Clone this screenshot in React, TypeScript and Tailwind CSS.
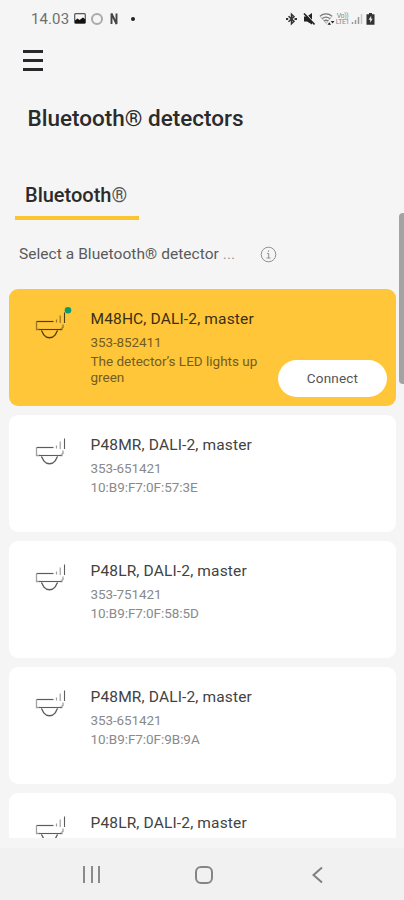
import type { ReactNode } from "react";

type Detector = {
  id: string;
  name: string;
  serial?: string;
  detail?: string;
  active?: boolean;
};

const detectors: Detector[] = [
  { id: "1", name: "M48HC, DALI-2, master", serial: "353-852411", detail: "The detector’s LED lights up green", active: true },
  { id: "2", name: "P48MR, DALI-2, master", serial: "353-651421", detail: "10:B9:F7:0F:57:3E" },
  { id: "3", name: "P48LR, DALI-2, master", serial: "353-751421", detail: "10:B9:F7:0F:58:5D" },
  { id: "4", name: "P48MR, DALI-2, master", serial: "353-651421", detail: "10:B9:F7:0F:9B:9A" },
  { id: "5", name: "P48LR, DALI-2, master" },
];

function StatusIcon({ width, children }: { width: number; children: ReactNode }) {
  return (
    <svg width={width} height="14" viewBox={`0 0 ${width} 14`} fill="none" className="shrink-0">
      {children}
    </svg>
  );
}

function StatusBar() {
  return (
    <div className="flex h-[38px] items-center justify-between pl-[31px] pr-[29px]">
      <div className="flex items-center">
        <span className="w-[43px] pt-px text-[15px] tracking-[0.1px] text-[#6f6f6f]">14.03</span>
        {/* picture */}
        <StatusIcon width={12}>
          <rect x="0.7" y="1.7" width="10.6" height="9.6" rx="1" stroke="#555" strokeWidth="1.2" />
          <path d="M1 11V8.5l2.5-2 2 1.5L9 5.5l2.3 2V11z" fill="#111" />
        </StatusIcon>
        <span className="ml-[5px] h-[12px] w-[12px] rounded-full border-2 border-[#aaa]" />
        <span className="ml-[7px]">
          <StatusIcon width={8}>
            <path d="M1.5 12V1.5L6.5 12V1.5" stroke="#444" strokeWidth="1.9" />
          </StatusIcon>
        </span>
        <span className="ml-[13px] h-1 w-1 rounded-full bg-[#222]" />
      </div>
      <div className="flex items-center">
        {/* bluetooth */}
        <StatusIcon width={11}>
          <path d="M2.500 4.300l5.500 5-2.500 2.500V2.200L8 4.700l-5.500 5" stroke="#333" strokeWidth="1.500" />
          <path d="M0 7h2.200M8.500 7H11" stroke="#333" strokeWidth="1.800" />
        </StatusIcon>
        {/* muted */}
        <span className="ml-[6px]">
          <StatusIcon width={12}>
            <path d="M1 4.500h3l5-3.500v11.500L4 9.500H1z" fill="#222" />
            <path d="M2.500 1.500l9 10" stroke="#f5f5f5" strokeWidth="1.200" />
            <path d="M1 1.500l10.500 11" stroke="#222" strokeWidth="1.600" />
          </StatusIcon>
        </span>
        {/* wifi */}
        <span className="ml-[4px]">
          <StatusIcon width={16}>
            <path d="M1 4.200C4.500 1.200 9.500 1.200 13 4.200M3 6.700c2.500-2 5.500-2 8 0M5 9c1.300-1 2.700-1 4 0" stroke="#777" strokeWidth="1.300" />
            <path d="M7.500 11.800L1 4.200M7.500 11l5.500-6.800" stroke="#aaa" strokeWidth="0.900" />
            <path d="M8.500 12.800l1.800-2.600 1.800 2.600zM11.800 9h3.600l-1.800 2.600z" fill="#222" />
          </StatusIcon>
        </span>
        <span className="flex w-[15px] flex-col text-center text-[7px] leading-[6.500px] tracking-[-0.400px] text-[#888]">
          <span>Vo))</span>
          <span>LTE1</span>
        </span>
        <span className="ml-[1px]">
          <StatusIcon width={12}>
            <path d="M1.500 12v-2M4.500 12V8M7.500 12V5" stroke="#999" strokeWidth="1.500" />
            <path d="M10.500 12V2" stroke="#c8c8c8" strokeWidth="1.500" />
          </StatusIcon>
        </span>
        {/* battery */}
        <span className="ml-[3px]">
          <StatusIcon width={9}>
            <path d="M3 1h3v1.300h2.500v10.400H.5V2.300H3z" fill="#333" />
            <path d="M5.200 3.800L2.600 7.800h1.600v3l2.400-4H5.200z" fill="#eee" />
          </StatusIcon>
        </span>
      </div>
    </div>
  );
}

function DetectorIcon({ active }: { active?: boolean }) {
  const main = active ? "#51400f" : "#5c5c5c";
  const soft = active ? "#97762a" : "#a0a0a0";
  return (
    <svg width="38" height="34" viewBox="0 0 38 34" fill="none" className="shrink-0">
      <path d="M18.500 15.500H1.500" stroke={main} strokeWidth="1.200" />
      <path d="M1.500 15.500v8h3M25 23.500h2v-1.500l1-.500v-3" stroke={soft} strokeWidth="1.300" />
      <path d="M4 23.500h22.500" stroke={main} strokeWidth="1.100" />
      <path d="M6.300 24.500c1.200 1 1.400 3 2.700 4.700 2.600 3.400 8.400 3.400 11 0 1.300-1.700 1.500-3.700 2.700-4.700" stroke={main} strokeWidth="1.300" />
      <path d="M21.500 13.500v3M25.200 9.500v7.500" stroke={soft} strokeWidth="1.200" />
      <path d="M29.500 6.500v10.500" stroke={main} strokeWidth="1.100" />
      {active && <circle cx="33" cy="4.300" r="3.300" fill="#0b9b72" />}
    </svg>
  );
}

function DetectorCard({ detector }: { detector: Detector }) {
  const { name, serial, detail, active } = detector;
  return (
    <li
      className={[
        "relative flex h-[117px] shrink-0 rounded-[9px] pl-[26px]",
        active ? "bg-[#ffc63a]" : "bg-white",
      ].join(" ")}
    >
      <div className="w-[55.5px] shrink-0 pt-[17px]">
        <DetectorIcon active={active} />
      </div>
      <div className="pt-[20px]">
        <div className={`whitespace-nowrap text-[15.5px] leading-[20px] tracking-[0.15px] ${active ? "text-[#3a2f14]" : "text-[#424242]"}`}>
          {name}
        </div>
        <div className={`text-[13.5px] ${active ? "text-[#735c24]" : "text-[#8a8a8a]"}`}>
          {serial && <div className="mt-[4px] leading-[18px] tracking-[-0.1px]">{serial}</div>}
          {detail && (
            <div className={active ? "w-[180px] pt-[2px] leading-[16px]" : "mt-[1px] leading-[18px] tracking-[-0.05px]"}>
              {detail}
            </div>
          )}
        </div>
      </div>
      {active && (
        <button className="absolute bottom-[9px] right-[9px] h-[37px] w-[109px] rounded-full bg-white text-[13.5px] tracking-[0.2px] text-[#555]">
          Connect
        </button>
      )}
    </li>
  );
}

export default function App() {
  return (
    <div className="relative flex h-[900px] w-[404px] flex-col overflow-hidden bg-[#f5f5f5] font-['Roboto',sans-serif]">
      <StatusBar />

      <button aria-label="Menu" className="ml-[23px] mt-[12px] flex h-[21px] w-[20px] flex-col justify-between">
        <span className="h-[3px] w-full bg-[#29272c]" />
        <span className="h-[3px] w-full bg-[#29272c]" />
        <span className="h-[3px] w-full bg-[#29272c]" />
      </button>

      <h1 className="ml-[27.5px] mt-[32px] h-[30px] whitespace-nowrap text-[22.5px] font-medium leading-[30px] text-[#2b2b2b]">
        Bluetooth<span className="font-normal">®</span> detectors
      </h1>

      <div className="ml-[15px] mt-[50px] h-[37px] w-[124px] border-b-4 border-[#fbc531] pl-[10px]">
        <span className="whitespace-nowrap text-[20px] font-medium leading-[25px] text-[#2b2b2b]">
          Bluetooth<span className="font-normal text-[#555]">®</span>
        </span>
      </div>

      <div className="mt-[25px] flex h-[20px] items-center pl-[19px]">
        <span className="w-[241px] whitespace-nowrap text-[15.5px] tracking-[0.05px] text-[#5a5a5a]">
          Select a Bluetooth® detector <span className="text-[#999]">...</span>
        </span>
        <svg width="17" height="17" viewBox="0 0 17 17" fill="none" stroke="#909090" className="mb-[2px]">
          <circle cx="8.500" cy="8.500" r="7.300" />
          <path d="M7 7.500h1.700V12M6.500 12h4M8.500 4.300v1.500" />
        </svg>
      </div>

      <ul className="ml-[9px] mt-[24px] flex h-[549px] w-[387px] flex-col gap-[9px] overflow-hidden">
        {detectors.map((d) => (
          <DetectorCard key={d.id} detector={d} />
        ))}
      </ul>

      <nav className="mt-auto flex h-[52px] items-center bg-[#f1f1f1] pl-[83px] pt-px">
        <span className="flex h-[17px] w-[17px] justify-between">
          <span className="w-[2px] bg-[#8a8a8a]" />
          <span className="w-[2px] bg-[#8a8a8a]" />
          <span className="w-[2px] bg-[#8a8a8a]" />
        </span>
        <span className="ml-[95px] h-[18px] w-[18px] rounded-[6px] border-2 border-[#858585]" />
        <svg width="12" height="18" viewBox="0 0 12 18" fill="none" className="ml-[99px]">
          <path d="M10 1.500L1.500 9l8.500 7.500" stroke="#808080" strokeWidth="2" />
        </svg>
      </nav>

      {/* scroll thumb */}
      <span className="absolute right-0 top-[213px] h-[171px] w-[5px] rounded-l-[4px] bg-[#a3a3a3]" />
    </div>
  );
}
